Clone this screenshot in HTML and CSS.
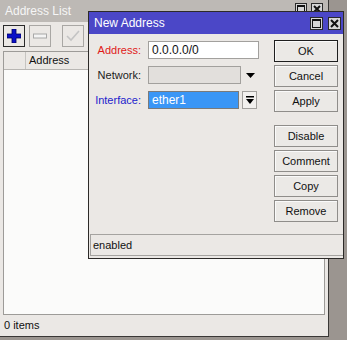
FILE: index.html
```html
<!DOCTYPE html>
<html>
<head>
  <title>Address List</title>
  <link rel="stylesheet" href="styles.css">
</head>
<body>
  <div class="desk">
    <div class="window list">
      <div class="titlebar">
        <span class="title">Address List</span>
        <div class="title-btns">
          <span class="tbtn">
            <svg width="8" height="8" viewBox="0 0 8 8"><rect x="0.5" y="0.5" width="7" height="7" fill="none" stroke="#111" stroke-width="1"/><rect x="0" y="0" width="8" height="2" fill="#111"/></svg>
          </span>
          <span class="tbtn">
            <svg width="8" height="8" viewBox="0 0 8 8"><path d="M1 1 L7 7 M7 1 L1 7" stroke="#111" stroke-width="2"/></svg>
          </span>
        </div>
      </div>

      <div class="toolbar">
        <span class="tool active">
          <svg width="14" height="14" viewBox="0 0 14 14"><path d="M5 0 H9 V5 H14 V9 H9 V14 H5 V9 H0 V5 H5 Z" fill="#0a10c8" stroke="#000060" stroke-width="0.8"/></svg>
        </span>
        <span class="tool">
          <svg width="14" height="6" viewBox="0 0 14 6"><rect x="0.5" y="1" width="13" height="4" fill="#f4f4f4" stroke="#a8a8a8"/></svg>
        </span>
        <span class="tool sep">
          <svg width="14" height="12" viewBox="0 0 14 12"><path d="M1 6 L5 10 L13 1" fill="none" stroke="#c4c4c4" stroke-width="1.6"/></svg>
        </span>
      </div>

      <div class="table">
        <div class="thead">
          <div class="cell first"></div>
          <div class="cell">Address</div>
        </div>
        <div class="tbody"></div>
      </div>

      <div class="status">0 items</div>
    </div>

    <div class="window dialog">
      <div class="titlebar blue">
        <span class="title">New Address</span>
        <div class="title-btns">
          <span class="tbtn big">
            <svg width="9" height="9" viewBox="0 0 9 9"><rect x="0.5" y="0.5" width="8" height="8" fill="none" stroke="#111" stroke-width="1"/><rect x="0" y="0" width="9" height="2" fill="#111"/></svg>
          </span>
          <span class="tbtn big">
            <svg width="9" height="9" viewBox="0 0 9 9"><path d="M1 1 L8 8 M8 1 L1 8" stroke="#111" stroke-width="2"/></svg>
          </span>
        </div>
      </div>

      <div class="dialog-body">
        <div class="form">
          <div class="row">
            <label class="red">Address:</label>
            <div class="field w-address">0.0.0.0/0</div>
          </div>
          <div class="row">
            <label>Network:</label>
            <div class="field disabled w-network"></div>
            <span class="arrow">
              <svg width="9" height="5" viewBox="0 0 9 5"><path d="M0 0 H9 L4.5 5 Z" fill="#000"/></svg>
            </span>
          </div>
          <div class="row">
            <label class="blue-text">Interface:</label>
            <div class="field selected w-iface">ether1</div>
            <span class="drop">
              <svg width="8" height="8" viewBox="0 0 8 8"><rect x="0" y="0" width="8" height="1.5" fill="#000"/><path d="M0 3 H8 L4 8 Z" fill="#000"/></svg>
            </span>
          </div>
        </div>

        <div class="actions">
          <button class="btn default">OK</button>
          <button class="btn">Cancel</button>
          <button class="btn">Apply</button>
          <button class="btn group">Disable</button>
          <button class="btn">Comment</button>
          <button class="btn">Copy</button>
          <button class="btn">Remove</button>
        </div>
      </div>

      <div class="status dialog-status">enabled</div>
    </div>
  </div>
</body>
</html>
```

FILE: styles.css
```css
body {
  margin: 0;
  background-color: #9b9590;
  font-family: "Liberation Sans", Arial, sans-serif;
  font-size: 11px;
  color: #111;
}

.desk {
  position: relative;
  width: 347px;
  height: 340px;
  overflow: hidden;
}

.window {
  box-sizing: border-box;
  background-color: #ebe8e5;
  display: flex;
  flex-direction: column;
}

.list {
  width: 329px;
  height: 337px;
  border-right: 1px solid #3a3836;
  border-bottom: 1px solid #3a3836;
}

.titlebar {
  height: 22px;
  flex: none;
  display: flex;
  align-items: center;
  background-color: #bdb9b5;
  color: #f6f6f6;
  font-size: 12px;
  padding-left: 5px;
}

.titlebar.blue {
  background-color: #4b47c7;
  color: #fff;
}

.title-btns {
  margin-left: auto;
  display: flex;
  gap: 4px;
  margin-right: 4px;
}

.tbtn {
  width: 12px;
  height: 11px;
  box-sizing: border-box;
  border: 1px solid #2a2a2a;
  background-color: #d6d6d6;
  display: flex;
  align-items: center;
  justify-content: center;
}

.list .title-btns {
  align-self: flex-start;
  margin-top: 3px;
  margin-right: 5px;
}

.tbtn.big {
  width: 13px;
  height: 13px;
}

.dialog .title-btns {
  margin-right: 2px;
  gap: 5px;
}

.toolbar {
  flex: none;
  display: flex;
  padding: 3px 3px 0;
  margin-bottom: 4px;
  gap: 4px;
}

.tool {
  width: 22px;
  height: 22px;
  box-sizing: border-box;
  border: 1px solid #a9a7a4;
  background-color: #ebe8e5;
  display: flex;
  align-items: center;
  justify-content: center;
}

.tool.active {
  border-color: #2a2a2a;
}

.tool.sep {
  margin-left: 7px;
}

.table {
  flex: 1;
  margin: 0 3px;
  border: 1px solid #9d9b98;
  display: flex;
  flex-direction: column;
  background-color: #fbfbfa;
}

.thead {
  height: 17px;
  display: flex;
  background-color: #ebe8e5;
  border-bottom: 1px solid #b8b6b3;
}

.cell {
  border-right: 1px solid #c6c4c1;
  padding-left: 3px;
  line-height: 17px;
  flex: 1;
}

.cell.first {
  flex: none;
  width: 18px;
}

.tbody {
  flex: 1;
}

.status {
  flex: none;
  height: 21px;
  line-height: 21px;
  padding-left: 4px;
}

.dialog {
  position: absolute;
  left: 88px;
  top: 11px;
  width: 256px;
  height: 248px;
  border: 1px solid #2c2a28;
}

.dialog-body {
  flex: 1;
  display: flex;
  justify-content: space-between;
  padding-top: 6px;
}

.form {
  display: flex;
  flex-direction: column;
  gap: 7px;
  margin-top: 1px;
}

.row {
  display: flex;
  align-items: center;
  height: 18px;
}

.row label {
  width: 52px;
  text-align: right;
  margin-right: 7px;
  color: #1c1c1c;
}

.row label.red {
  color: #e01818;
}

.row label.blue-text {
  color: #2222cc;
}

.field {
  height: 18px;
  box-sizing: border-box;
  border: 1px solid #a2a09d;
  background-color: #fff;
  line-height: 16px;
  padding-left: 3px;
  font-size: 12px;
}

.field.disabled {
  background-color: #e2dfdc;
}

.field.selected {
  background-color: #3a96f6;
  color: #fff;
  border-color: #7a7a7a;
}

.w-address {
  width: 111px;
}

.w-network {
  width: 93px;
}

.w-iface {
  width: 91px;
}

.arrow {
  width: 18px;
  display: flex;
  justify-content: center;
}

.drop {
  margin-left: 3px;
  width: 15px;
  height: 18px;
  box-sizing: border-box;
  border: 1px solid #a2a09d;
  background-color: #f2f0ee;
  display: flex;
  align-items: center;
  justify-content: center;
}

.actions {
  display: flex;
  flex-direction: column;
  gap: 3px;
  width: 64px;
  margin-right: 5px;
}

.btn {
  height: 22px;
  padding: 0;
  font-family: inherit;
  font-size: 11px;
  color: #111;
  background-color: #ebe9e6;
  border: 1px solid #8f8d8a;
  box-shadow: inset 1px 1px 0 #fafafa;
}

.btn.default {
  border-color: #1e1e1e;
}

.btn.group {
  margin-top: 10px;
}

.dialog-status {
  height: 22px;
  line-height: 20px;
  box-sizing: border-box;
  margin: 0 0 2px 1px;
  padding-left: 2px;
  border: 1px solid #a5a3a0;
  border-right: none;
}
```
